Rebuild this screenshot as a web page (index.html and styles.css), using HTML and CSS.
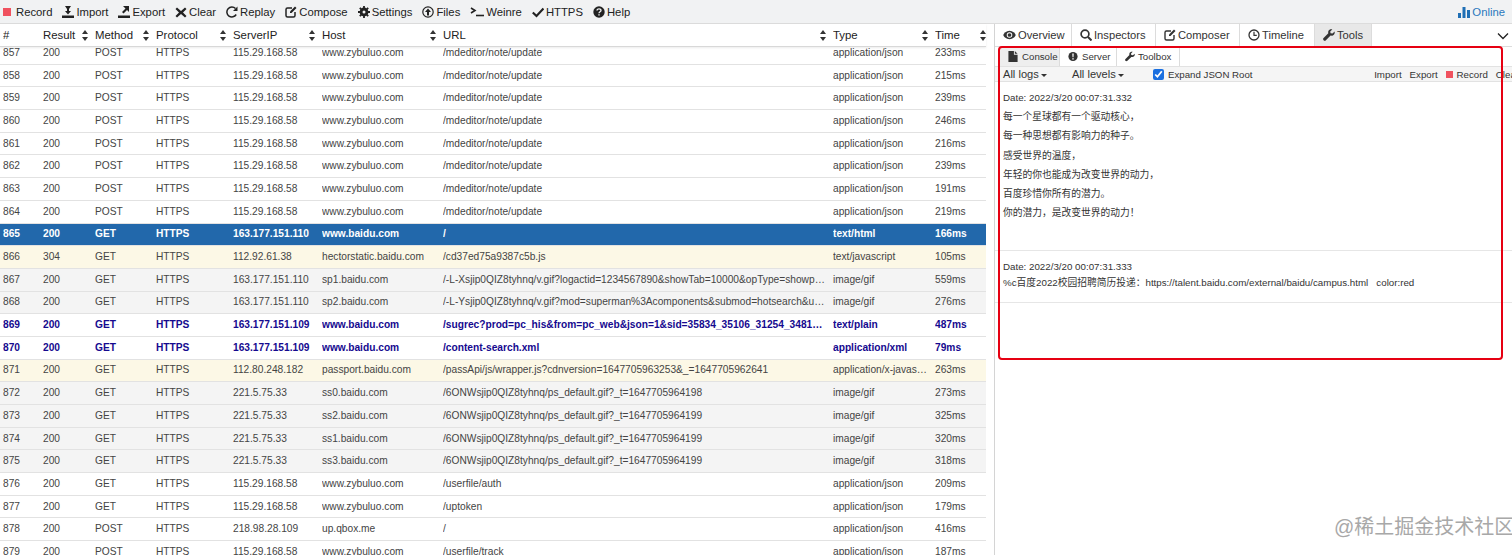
FILE: index.html
```html
<!DOCTYPE html>
<html lang="en">
<head>
<meta charset="utf-8">
<title>Whistle</title>
<link rel="stylesheet" href="styles.css">
</head>
<body>
<svg class="defs" width="0" height="0" aria-hidden="true">
  <symbol id="sort" viewBox="0 0 6 11"><path d="M3 0 6 4H0zM3 11 0 7h6z" fill="#333"/></symbol>
  <symbol id="wrench" viewBox="0 0 12 12"><path d="M11.6 2.6 9.5 4.6 7.6 4.2 7.2 2.4 9.3.4C7.7-.1 6 .6 5.4 2c-.3.8-.3 1.500-.1 2.200L.6 8.900c-.7.700-.7 1.600 0 2.300.7.700 1.600.7 2.300 0l4.700-4.700c.7.200 1.500.2 2.200-.1 1.500-.6 2.200-2.200 1.800-3.800z" fill="#333"/></symbol>
</svg>
<header class="toolbar">
  <a class="tool"><i class="rec"></i>Record</a>
  <a class="tool"><svg class="ico" viewBox="0 0 12 12"><path d="M3 0h6L7 3v2h2L6 8.500 3 5h2V3zM0 9.500h12V12H0z" fill="#222"/></svg>Import</a>
  <a class="tool"><svg class="ico" viewBox="0 0 12 12"><path d="M5 0h6v6L9 4 5.500 7.500 4 6l3.500-3.500zM0 9.500h12V12H0z" fill="#222"/></svg>Export</a>
  <a class="tool"><svg class="ico" viewBox="0 0 12 12"><path d="M2 1.500 6 5l4-3.500 1.500 1.500L8 6.500l3.500 3.500-1.500 1.500L6 8l-4 3.500L.5 10 4 6.500.5 3z" fill="#222"/></svg>Clear</a>
  <a class="tool"><svg class="ico" viewBox="0 0 12 12"><path d="M10.200 8.500A5 5 0 1 1 9.500 2.500" fill="none" stroke="#222" stroke-width="1.500"/><path d="M11.500 .5v4.500H7z" fill="#222"/></svg>Replay</a>
  <a class="tool"><svg class="ico" viewBox="0 0 12 12"><path d="M7 2H2.500A1.500 1.500 0 0 0 1 3.500v6A1.500 1.500 0 0 0 2.500 11h6A1.500 1.500 0 0 0 10 9.500V6" fill="none" stroke="#222" stroke-width="1.500"/><path d="M10 .5 11.500 2 6.500 7H5V5.500z" fill="#222"/></svg>Compose</a>
  <a class="tool"><svg class="ico" viewBox="0 0 12 12"><circle cx="6" cy="6" r="3.300" fill="none" stroke="#222" stroke-width="2.200"/><path d="M6 0v12M0 6h12M1.800 1.800l8.400 8.400M10.200 1.800l-8.400 8.400" stroke="#222" stroke-width="1.800"/><circle cx="6" cy="6" r="1.500" fill="#f1f2f3"/></svg>Settings</a>
  <a class="tool"><svg class="ico" viewBox="0 0 12 12"><circle cx="6" cy="6" r="5.200" fill="none" stroke="#222" stroke-width="1.200"/><path d="M6 2.500 9 6H7v3.500H5V6H3z" fill="#222"/></svg>Files</a>
  <a class="tool"><svg class="ico ico-wide" viewBox="0 0 14 12"><path d="M1 2l4 2.500L1 7" fill="none" stroke="#222" stroke-width="1.600"/><path d="M6 9.500h8" stroke="#222" stroke-width="1.600"/></svg>Weinre</a>
  <a class="tool"><svg class="ico" viewBox="0 0 12 12"><path d="M.8 6.500 4.500 10 11.500 2.500" fill="none" stroke="#222" stroke-width="2.200"/></svg>HTTPS</a>
  <a class="tool"><svg class="ico" viewBox="0 0 12 12"><circle cx="6" cy="6" r="5.700" fill="#222"/><path d="M4 4.600C4 3.400 5 2.900 6 2.900s2 .6 2 1.600c0 1.300-2 1.400-2 2.800" fill="none" stroke="#f1f2f3" stroke-width="1.300"/><path d="M5.300 8.200h1.400v1.400H5.300z" fill="#f1f2f3"/></svg>Help</a>
  <a class="tool online"><svg class="ico" viewBox="0 0 12 12"><path d="M0 7h3v5H0zM4.500 1h3v11h-3zM9 4h3v8H9z" fill="#1f6fb5"/></svg>Online</a>
</header>
<main class="panes">
  <section class="network">
    <div class="row head">
      <div>#</div>
      <div class="sortable">Result<svg class="sort"><use href="#sort"/></svg></div>
      <div class="sortable">Method<svg class="sort"><use href="#sort"/></svg></div>
      <div class="sortable">Protocol<svg class="sort"><use href="#sort"/></svg></div>
      <div class="sortable">ServerIP<svg class="sort"><use href="#sort"/></svg></div>
      <div class="sortable">Host<svg class="sort"><use href="#sort"/></svg></div>
      <div class="sortable">URL<svg class="sort"><use href="#sort"/></svg></div>
      <div class="sortable">Type<svg class="sort"><use href="#sort"/></svg></div>
      <div class="sortable last">Time<svg class="sort"><use href="#sort"/></svg></div>
    </div>
    <div class="list">
      <div class="rows">
        <div class="row"><div>857</div><div>200</div><div>POST</div><div>HTTPS</div><div>115.29.168.58</div><div>www.zybuluo.com</div><div>/mdeditor/note/update</div><div>application/json</div><div>233ms</div></div>
        <div class="row"><div>858</div><div>200</div><div>POST</div><div>HTTPS</div><div>115.29.168.58</div><div>www.zybuluo.com</div><div>/mdeditor/note/update</div><div>application/json</div><div>215ms</div></div>
        <div class="row"><div>859</div><div>200</div><div>POST</div><div>HTTPS</div><div>115.29.168.58</div><div>www.zybuluo.com</div><div>/mdeditor/note/update</div><div>application/json</div><div>239ms</div></div>
        <div class="row"><div>860</div><div>200</div><div>POST</div><div>HTTPS</div><div>115.29.168.58</div><div>www.zybuluo.com</div><div>/mdeditor/note/update</div><div>application/json</div><div>246ms</div></div>
        <div class="row"><div>861</div><div>200</div><div>POST</div><div>HTTPS</div><div>115.29.168.58</div><div>www.zybuluo.com</div><div>/mdeditor/note/update</div><div>application/json</div><div>216ms</div></div>
        <div class="row"><div>862</div><div>200</div><div>POST</div><div>HTTPS</div><div>115.29.168.58</div><div>www.zybuluo.com</div><div>/mdeditor/note/update</div><div>application/json</div><div>239ms</div></div>
        <div class="row"><div>863</div><div>200</div><div>POST</div><div>HTTPS</div><div>115.29.168.58</div><div>www.zybuluo.com</div><div>/mdeditor/note/update</div><div>application/json</div><div>191ms</div></div>
        <div class="row"><div>864</div><div>200</div><div>POST</div><div>HTTPS</div><div>115.29.168.58</div><div>www.zybuluo.com</div><div>/mdeditor/note/update</div><div>application/json</div><div>219ms</div></div>
        <div class="row selected"><div>865</div><div>200</div><div>GET</div><div>HTTPS</div><div>163.177.151.110</div><div>www.baidu.com</div><div>/</div><div>text/html</div><div>166ms</div></div>
        <div class="row script"><div>866</div><div>304</div><div>GET</div><div>HTTPS</div><div>112.92.61.38</div><div>hectorstatic.baidu.com</div><div>/cd37ed75a9387c5b.js</div><div>text/javascript</div><div>105ms</div></div>
        <div class="row image"><div>867</div><div>200</div><div>GET</div><div>HTTPS</div><div>163.177.151.110</div><div>sp1.baidu.com</div><div>/-L-Xsjip0QIZ8tyhnq/v.gif?logactid=1234567890&amp;showTab=10000&amp;opType=showpv&amp;express=1&amp;fr=home</div><div>image/gif</div><div>559ms</div></div>
        <div class="row image"><div>868</div><div>200</div><div>GET</div><div>HTTPS</div><div>163.177.151.110</div><div>sp2.baidu.com</div><div>/-L-Ysjip0QIZ8tyhnq/v.gif?mod=superman%3Acomponents&amp;submod=hotsearch&amp;utype=undefined&amp;superver=supernewplus</div><div>image/gif</div><div>276ms</div></div>
        <div class="row xhr"><div>869</div><div>200</div><div>GET</div><div>HTTPS</div><div>163.177.151.109</div><div>www.baidu.com</div><div>/sugrec?prod=pc_his&amp;from=pc_web&amp;json=1&amp;sid=35834_35106_31254_34812_35914_36024_36166_34584</div><div>text/plain</div><div>487ms</div></div>
        <div class="row xhr"><div>870</div><div>200</div><div>GET</div><div>HTTPS</div><div>163.177.151.109</div><div>www.baidu.com</div><div>/content-search.xml</div><div>application/xml</div><div>79ms</div></div>
        <div class="row script"><div>871</div><div>200</div><div>GET</div><div>HTTPS</div><div>112.80.248.182</div><div>passport.baidu.com</div><div>/passApi/js/wrapper.js?cdnversion=1647705963253&amp;_=1647705962641</div><div>application/x-javascript</div><div>263ms</div></div>
        <div class="row image"><div>872</div><div>200</div><div>GET</div><div>HTTPS</div><div>221.5.75.33</div><div>ss0.baidu.com</div><div>/6ONWsjip0QIZ8tyhnq/ps_default.gif?_t=1647705964198</div><div>image/gif</div><div>273ms</div></div>
        <div class="row image"><div>873</div><div>200</div><div>GET</div><div>HTTPS</div><div>221.5.75.33</div><div>ss2.baidu.com</div><div>/6ONWsjip0QIZ8tyhnq/ps_default.gif?_t=1647705964199</div><div>image/gif</div><div>325ms</div></div>
        <div class="row image"><div>874</div><div>200</div><div>GET</div><div>HTTPS</div><div>221.5.75.33</div><div>ss1.baidu.com</div><div>/6ONWsjip0QIZ8tyhnq/ps_default.gif?_t=1647705964199</div><div>image/gif</div><div>320ms</div></div>
        <div class="row image"><div>875</div><div>200</div><div>GET</div><div>HTTPS</div><div>221.5.75.33</div><div>ss3.baidu.com</div><div>/6ONWsjip0QIZ8tyhnq/ps_default.gif?_t=1647705964199</div><div>image/gif</div><div>318ms</div></div>
        <div class="row"><div>876</div><div>200</div><div>GET</div><div>HTTPS</div><div>115.29.168.58</div><div>www.zybuluo.com</div><div>/userfile/auth</div><div>application/json</div><div>209ms</div></div>
        <div class="row"><div>877</div><div>200</div><div>GET</div><div>HTTPS</div><div>115.29.168.58</div><div>www.zybuluo.com</div><div>/uptoken</div><div>application/json</div><div>179ms</div></div>
        <div class="row"><div>878</div><div>200</div><div>POST</div><div>HTTPS</div><div>218.98.28.109</div><div>up.qbox.me</div><div>/</div><div>application/json</div><div>416ms</div></div>
        <div class="row"><div>879</div><div>200</div><div>POST</div><div>HTTPS</div><div>115.29.168.58</div><div>www.zybuluo.com</div><div>/userfile/track</div><div>application/json</div><div>187ms</div></div>
      </div>
    </div>
  </section>
  <section class="detail">
    <nav class="tabs">
      <a class="tab t-over"><svg class="ico" viewBox="0 0 14 12"><path d="M7 1.500C3.500 1.500 1 4 .3 6 1 8 3.500 10.500 7 10.500S13 8 13.700 6C13 4 10.500 1.500 7 1.500z" fill="#333"/><circle cx="7" cy="6" r="3" fill="#fff"/><circle cx="7" cy="6" r="2" fill="#333"/></svg>Overview</a>
      <a class="tab t-insp"><svg class="ico" viewBox="0 0 12 12"><circle cx="5" cy="5" r="3.900" fill="none" stroke="#333" stroke-width="1.700"/><path d="M8 8l3.500 3.500" stroke="#333" stroke-width="2"/></svg>Inspectors</a>
      <a class="tab t-comp"><svg class="ico" viewBox="0 0 12 12"><path d="M7 2H2.500A1.500 1.500 0 0 0 1 3.500v6A1.500 1.500 0 0 0 2.500 11h6A1.500 1.500 0 0 0 10 9.500V6" fill="none" stroke="#333" stroke-width="1.400"/><path d="M10 .5 11.500 2 6.500 7H5V5.500z" fill="#333"/></svg>Composer</a>
      <a class="tab t-time"><svg class="ico" viewBox="0 0 12 12"><circle cx="6" cy="6" r="5" fill="none" stroke="#333" stroke-width="1.300"/><path d="M6 2.800V6.300H8.800" fill="none" stroke="#333" stroke-width="1.200"/></svg>Timeline</a>
      <a class="tab t-tools active"><svg class="ico"><use href="#wrench"/></svg>Tools</a>
      <svg class="chevron" viewBox="0 0 12 8"><path d="M1 1.500 6 6.500 11 1.500" fill="none" stroke="#222" stroke-width="1.300"/></svg>
    </nav>
    <nav class="subtabs">
      <a class="subtab s-console active"><svg class="ico-sm" viewBox="0 0 10 12"><path d="M0 0h6v4h4v8H0zM7 0l3 3H7z" fill="#333"/></svg>Console</a>
      <a class="subtab s-server"><svg class="ico-sm" viewBox="0 0 12 12"><circle cx="6" cy="6" r="5.500" fill="#333"/><path d="M5.100 2.500h1.800L6.600 7H5.400zM5.100 8h1.800v1.600H5.100z" fill="#fff"/></svg>Server</a>
      <a class="subtab s-box"><svg class="ico-sm"><use href="#wrench"/></svg>Toolbox</a>
    </nav>
    <div class="filters">
      <span class="select logs">All logs<i class="caret"></i></span>
      <span class="select levels">All levels<i class="caret"></i></span>
      <label class="expand"><input type="checkbox" checked>Expand JSON Root</label>
      <span class="actions">
        <a>Import</a>
        <a>Export</a>
        <a class="act-rec"><i class="rec small"></i>Record</a>
        <a>Clear</a>
      </span>
    </div>
    <div class="logs-view">
      <article class="entry first">
        <p class="date">Date: 2022/3/20 00:07:31.332</p>
        <p>每一个星球都有一个驱动核心，</p>
        <p>每一种思想都有影响力的种子。</p>
        <p>感受世界的温度，</p>
        <p>年轻的你也能成为改变世界的动力，</p>
        <p>百度珍惜你所有的潜力。</p>
        <p>你的潜力，是改变世界的动力！</p>
      </article>
      <article class="entry second">
        <p class="date">Date: 2022/3/20 00:07:31.333</p>
        <p class="msg">%c百度2022校园招聘简历投递：https://talent.baidu.com/external/baidu/campus.html&nbsp;&nbsp; color:red</p>
      </article>
    </div>
  </section>
</main>
<div class="highlight"></div>
<div class="watermark">@稀土掘金技术社区</div>
</body>
</html>
```
FILE: styles.css
```css
* { box-sizing: border-box; }
html, body { margin: 0; padding: 0; height: 555px; overflow: hidden; background: #fff; }
body { font-family: "Liberation Sans", "Noto Sans CJK SC", sans-serif; color: #333; position: relative; }
.defs { position: absolute; }
p { margin: 0; }

.toolbar { height: 24px; display: flex; align-items: center; padding-left: 2px; background: #f1f2f3; border-bottom: 1px solid #dcdcdc; font-size: 11.3px; color: #222; }
.tool { display: flex; align-items: center; gap: 2px; margin-right: 10px; white-space: nowrap; }
.rec { display: block; width: 8px; height: 8px; margin: 0 3px 0 1px; background: #f0525f; }
.ico { width: 12px; height: 12px; flex: none; }
.ico-wide { width: 14px; }
.online { margin-left: auto; margin-right: 7px; color: #2a78bd; }

.panes { display: flex; height: 531px; }
.network { width: 995px; flex: none; border-right: 1px solid #d4d4d4; padding-right: 8px; display: flex; flex-direction: column; }
.row { display: grid; grid-template-columns: 40px 52px 61px 77px 89px 121px 390px 102px 51px; padding-left: 3px; height: 22.7px; align-items: center; font-size: 10.2px; line-height: 12px; color: #444; background: #fff; border-bottom: 1px solid #e2e2e2; }
.row > div { white-space: nowrap; overflow: hidden; text-overflow: ellipsis; padding-right: 7px; }
.row > .sortable { display: flex; justify-content: space-between; align-items: center; }
.row > .last { padding-right: 0; }
.head { height: 23px; font-size: 11.4px; color: #222; border-bottom: 1px solid #d8d8d8; box-shadow: 0 1px 2px rgba(0,0,0,.08); position: relative; z-index: 1; }
.sort { width: 6px; height: 11px; flex: none; }
.list { flex: 1; overflow: hidden; }
.rows { margin-top: -5px; }
.row.selected { background: #2268ab; color: #fff; font-weight: bold; }
.row.script { background: #fcf8e6; }
.row.image { background: #f4f4f4; }
.row.xhr { color: #15098f; font-weight: bold; }

.detail { flex: 1; min-width: 0; }
.tabs { height: 23px; display: flex; align-items: stretch; padding-left: 0; border-bottom: 1px solid #dcdcdc; font-size: 11.2px; position: relative; }
.tab { display: flex; align-items: center; gap: 2px; padding-left: 8px; border-right: 1px solid #dcdcdc; color: #333; }
.t-over { width: 77px; }
.t-over .ico { width: 13px; }
.t-insp { width: 84px; }
.t-comp { width: 84px; }
.t-time { width: 75px; }
.t-tools { width: 57px; }
.tab.active { background: #e8e8e8; }
.chevron { width: 12px; height: 8px; margin: 8px 3px 0 auto; }
.subtabs { height: 20px; display: flex; font-size: 9.7px; border-bottom: 1px solid #e2e2e2; padding-left: 5px; }
.subtab { display: flex; align-items: center; gap: 4px; padding-left: 8px; border-right: 1px solid #dcdcdc; }
.s-console { width: 60px; }
.s-server { width: 57px; padding-left: 8px; }
.s-box { width: 63px; padding-left: 8px; gap: 3px; }
.subtab.active { background: #eeeeee; }
.ico-sm { width: 10px; height: 11px; flex: none; }
.filters { height: 15px; display: flex; align-items: center; background: #f5f5f5; border-bottom: 1px solid #e2e2e2; padding-left: 8px; font-size: 9.7px; white-space: nowrap; overflow: hidden; }
.select { display: flex; align-items: center; font-size: 11.1px; gap: 2px; }
.logs { width: 69px; }
.levels { width: 81px; }
.caret { display: block; width: 0; height: 0; margin-top: 2px; border: 3px solid transparent; border-top-color: #333; border-bottom: 0; }
.expand { display: flex; align-items: center; gap: 4px; }
.expand input { width: 11px; height: 11px; margin: 0; accent-color: #1a6fe0; }
.actions { display: flex; margin-left: auto; gap: 8px; margin-right: -7px; }
.act-rec { display: flex; align-items: center; }
.rec.small { width: 7px; height: 7px; margin: 0 4px 0 0; }

.logs-view { font-size: 9.75px; line-height: 19.3px; color: #333; }
.entry { border-bottom: 1px solid #e6e6e6; padding-left: 8px; }
.first { height: 169px; padding-top: 7px; }
.first .date { line-height: 18px; }
.second { height: 52px; padding-top: 8px; }
.second .date { line-height: 16px; }
.msg { line-height: 16px; }

.highlight { position: absolute; left: 998px; top: 46px; width: 505px; height: 314px; border: 2px solid #e60012; border-radius: 4px; pointer-events: none; }
.watermark { position: absolute; left: 1334px; top: 515px; font-size: 20px; line-height: 24px; color: #a8a8a8; white-space: nowrap; }
```
